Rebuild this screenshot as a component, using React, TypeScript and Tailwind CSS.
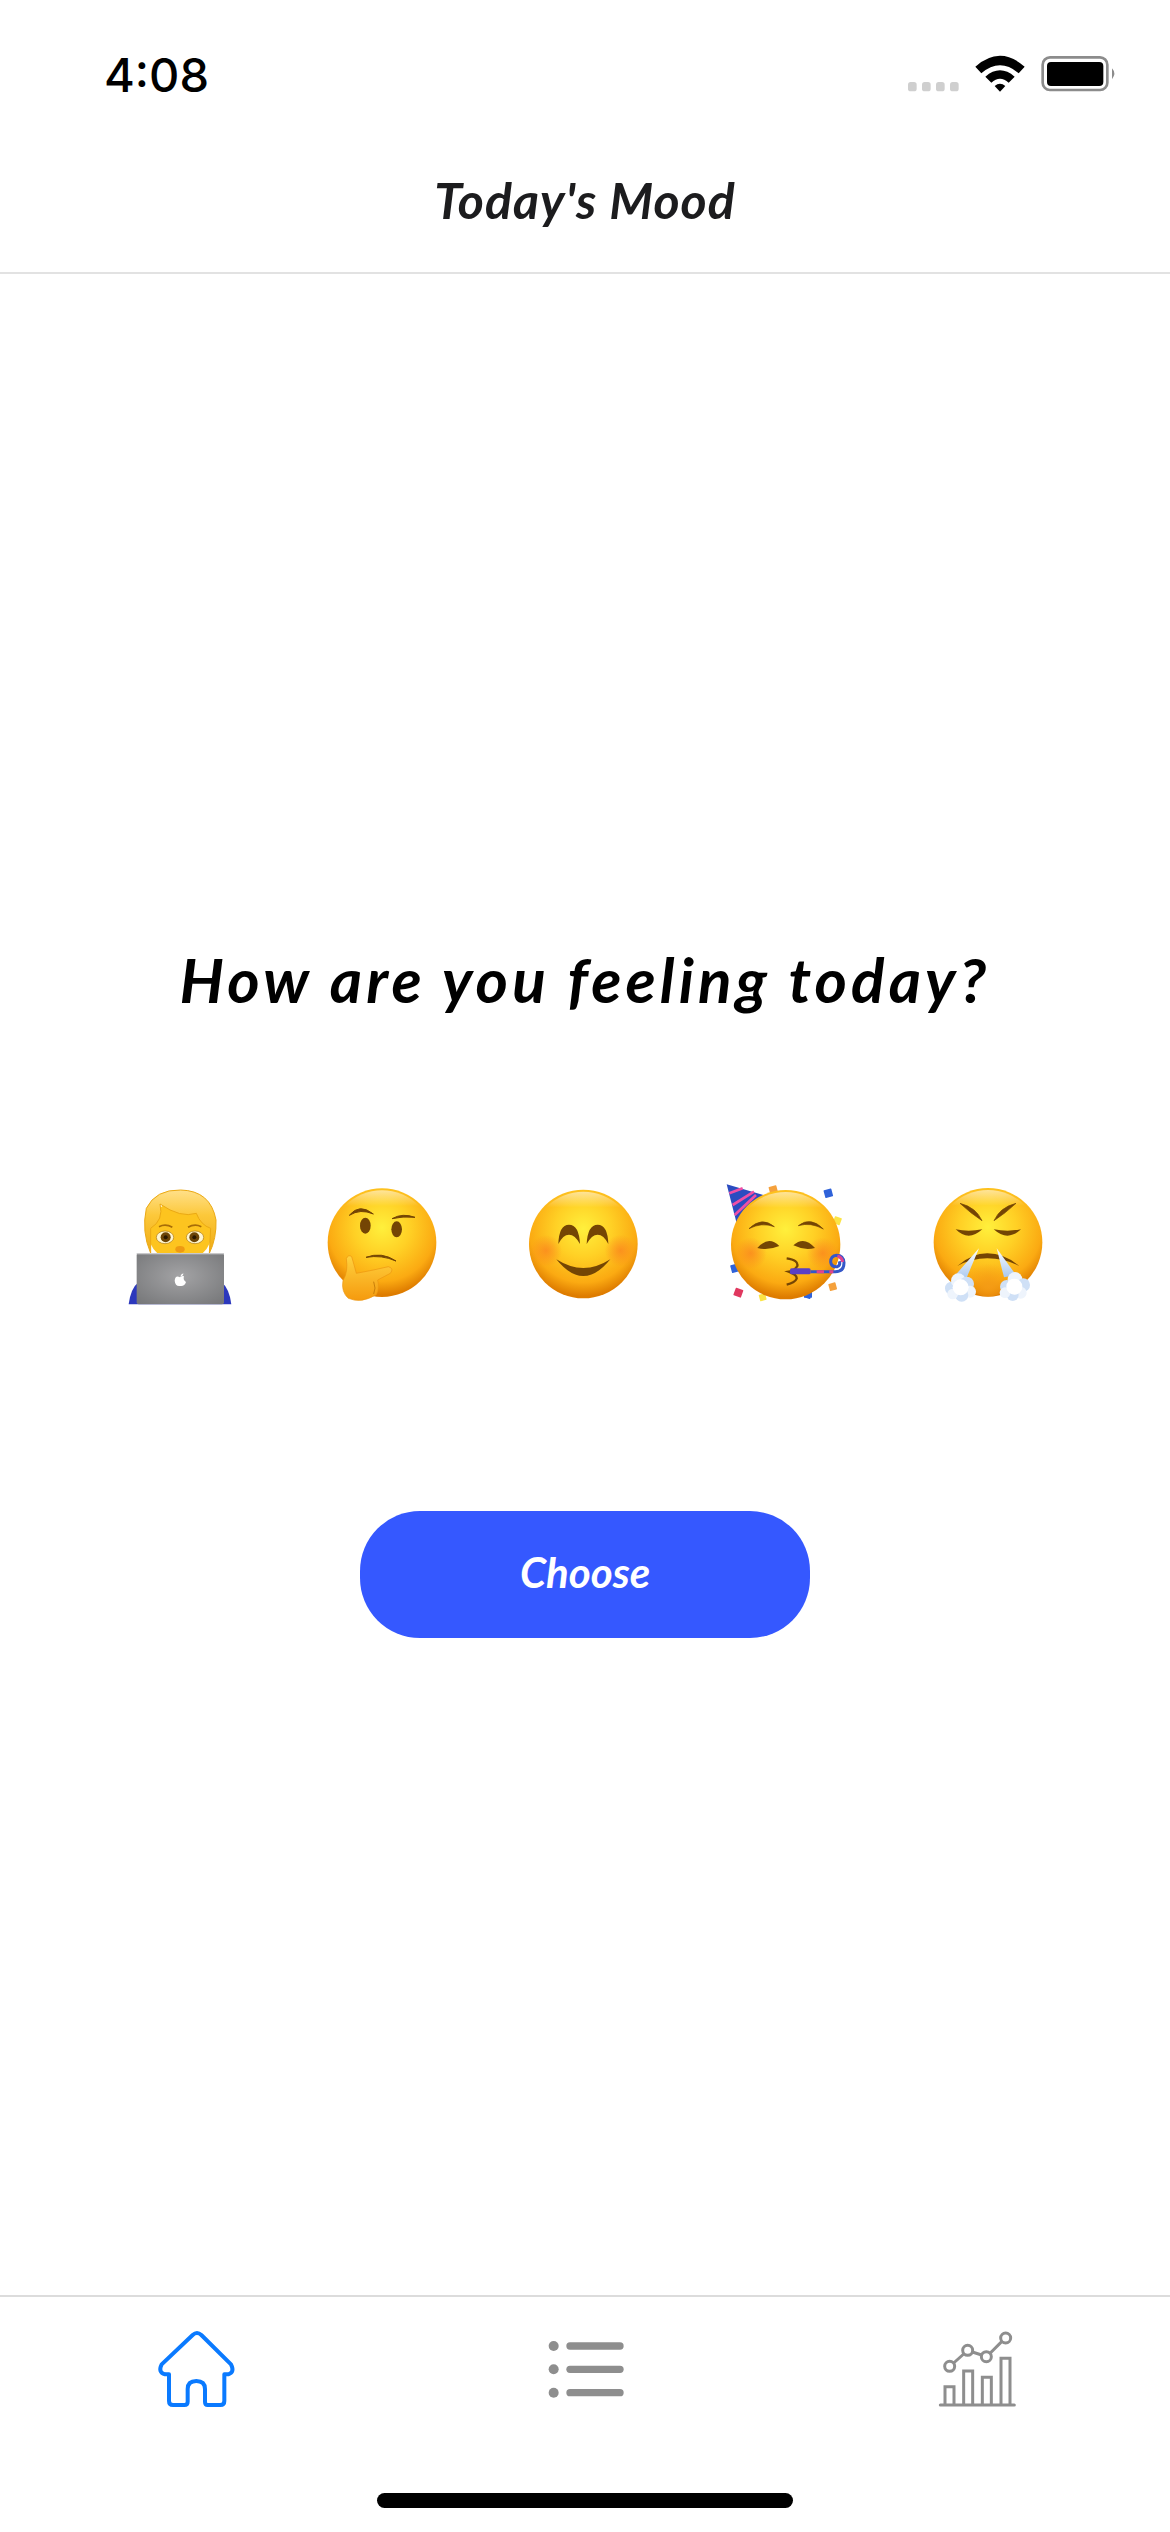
const BROWN = '#744504'

function Face({ id, cx, cy, r = 163 }: { id: string; cx: number; cy: number; r?: number }) {
  return (
    <>
      <defs>
        <radialGradient id={`${id}-base`} cx="50%" cy="36%" r="62%">
          <stop offset="0%" stopColor="#fff03c" />
          <stop offset="42%" stopColor="#ffd025" />
          <stop offset="80%" stopColor="#fbaa12" />
          <stop offset="100%" stopColor="#de7c00" />
        </radialGradient>
        <linearGradient id={`${id}-shine`} x1="0" y1="0" x2="0" y2="1">
          <stop offset="0%" stopColor="#ffffff" stopOpacity="0.55" />
          <stop offset="15%" stopColor="#ffffff" stopOpacity="0" />
        </linearGradient>
      </defs>
      <circle cx={cx} cy={cy} r={r} fill={`url(#${id}-base)`} />
      <circle cx={cx} cy={cy} r={r - 6} fill={`url(#${id}-shine)`} />
    </>
  )
}

function Blush({ id, cx, cy }: { id: string; cx: number; cy: number }) {
  return (
    <>
      <defs>
        <radialGradient id={id}>
          <stop offset="0%" stopColor="#fb8a1e" stopOpacity="0.85" />
          <stop offset="100%" stopColor="#fb8a1e" stopOpacity="0" />
        </radialGradient>
      </defs>
      <circle cx={cx} cy={cy} r="48" fill={`url(#${id})`} />
    </>
  )
}

function PersonEmoji() {
  return (
    <svg viewBox="43 60 390 390" className="w-[130px] h-[130px]">
      <defs>
        <radialGradient id="laptop" cx="50%" cy="45%" r="70%">
          <stop offset="0%" stopColor="#a3a3a5" />
          <stop offset="100%" stopColor="#77787a" />
        </radialGradient>
        <linearGradient id="hair" x1="0" y1="0" x2="0" y2="1">
          <stop offset="0%" stopColor="#ffe08a" />
          <stop offset="40%" stopColor="#fcc83a" />
          <stop offset="100%" stopColor="#efaa14" />
        </linearGradient>
      </defs>
      <path d="M84 433Q90 385 114 366L362 366Q386 385 392 433Z" fill="#2c38bd" />
      <ellipse cx="238" cy="215" rx="96" ry="92" fill="#fdc41f" />
      <path
        d="M150 280Q122 215 137 145Q165 88 240 90Q330 92 346 180Q348 235 326 280L330 205Q300 195 287 160Q240 175 178 132Q190 180 150 205Z"
        fill="url(#hair)"
        stroke="#eba913"
        strokeWidth="3"
      />
      <path d="M175 200Q195 190 215 202M262 202Q282 190 302 200" stroke="#a86e08" strokeWidth="5" fill="none" />
      <ellipse cx="193" cy="232" rx="26" ry="19" fill="#fff6d0" stroke="#a9760f" strokeWidth="2" />
      <ellipse cx="283" cy="232" rx="26" ry="19" fill="#fff6d0" stroke="#a9760f" strokeWidth="2" />
      <circle cx="195" cy="232" r="15" fill="#6d4506" />
      <circle cx="281" cy="232" r="15" fill="#6d4506" />
      <circle cx="195" cy="232" r="6" fill="#2a1900" />
      <circle cx="281" cy="232" r="6" fill="#2a1900" />
      <ellipse cx="238" cy="268" rx="14" ry="10" fill="#ee9a12" />
      <rect x="108" y="279" width="262" height="154" rx="6" fill="url(#laptop)" />
      <rect x="108" y="279" width="262" height="4" fill="#c9c9cb" />
      <path
        d="M238 352Q224 344 222 362Q224 380 238 378Q252 380 256 366Q246 360 250 349Q246 346 238 352Z"
        fill="#ffffff"
      />
      <path d="M239 350Q240 342 248 340Q248 348 239 350Z" fill="#ffffff" />
    </svg>
  )
}

function ThinkingEmoji() {
  return (
    <svg viewBox="648 60 390 390" className="w-[130px] h-[130px]">
      <defs>
        <linearGradient id="hand" x1="0" y1="0" x2="0" y2="1">
          <stop offset="0%" stopColor="#ffd23f" />
          <stop offset="100%" stopColor="#f59a0e" />
        </linearGradient>
      </defs>
      <Face id="think" cx={843} cy={248} />
      <path d="M745 166Q775 128 817 162Q778 145 745 166Z" fill={BROWN} stroke={BROWN} strokeWidth="3" />
      <path d="M873 176Q905 158 942 172Q905 168 873 176Z" fill={BROWN} stroke={BROWN} strokeWidth="3" />
      <ellipse cx="793" cy="197" rx="16" ry="24" fill={BROWN} />
      <ellipse cx="887" cy="208" rx="16" ry="24" fill={BROWN} />
      <path d="M795 292Q842 274 885 303Q842 284 795 292Z" fill={BROWN} stroke={BROWN} strokeWidth="3" />
      <path
        d="M736 296Q742 282 752 290Q758 310 766 340Q820 330 862 320Q880 325 868 340L830 360Q836 385 826 404Q780 432 742 415Q720 395 726 362Q742 335 736 296Z"
        fill="url(#hand)"
        stroke="#ec9610"
        strokeWidth="2"
      />
      <path d="M818 365Q826 385 818 402" stroke="#c97f0a" strokeWidth="3" fill="none" />
    </svg>
  )
}

function SmileEmoji() {
  return (
    <svg viewBox="1254 60 390 390" className="w-[130px] h-[130px]">
      <Face id="smile" cx={1447} cy={252} />
      <Blush id="smile-l" cx={1335} cy={272} />
      <Blush id="smile-r" cx={1559} cy={272} />
      <path d="M1372 252Q1374 194 1404 194Q1434 194 1437 252Q1422 224 1404 224Q1386 224 1372 252Z" fill={BROWN} />
      <path d="M1457 252Q1460 194 1490 194Q1520 194 1522 252Q1508 224 1490 224Q1472 224 1457 252Z" fill={BROWN} />
      <path d="M1366 298Q1447 350 1528 298Q1447 398 1366 298Z" fill={BROWN} />
    </svg>
  )
}

function PartyEmoji() {
  const confetti = [
    { x: 520, y: 90, c: '#f5a13c', s: 24 },
    { x: 598, y: 120, c: '#e0385f', s: 24 },
    { x: 685, y: 100, c: '#2f62d9', s: 24 },
    { x: 712, y: 182, c: '#fbe446', s: 22 },
    { x: 405, y: 325, c: '#2f62d9', s: 24 },
    { x: 415, y: 398, c: '#e0385f', s: 24 },
    { x: 488, y: 412, c: '#fbe446', s: 20 },
    { x: 624, y: 405, c: '#2f62d9', s: 20 },
    { x: 698, y: 380, c: '#f5a13c', s: 22 },
  ]
  return (
    <svg viewBox="363 60 390 390" className="w-[130px] h-[130px]">
      <path d="M380 73L490 105L410 190Z" fill="#2b4cc0" />
      <path d="M388 100L428 85M398 135L462 95M404 165L468 105" stroke="#ef4fa6" strokeWidth="8" fill="none" />
      {confetti.map((c, i) => (
        <rect
          key={i}
          x={c.x - c.s / 2}
          y={c.y - c.s / 2}
          width={c.s}
          height={c.s}
          rx="2"
          fill={c.c}
          transform={`rotate(${i % 2 ? 20 : -15} ${c.x} ${c.y})`}
        />
      ))}
      <rect x="612" y="395" width="24" height="18" fill="#2f62d9" />
      <Face id="party" cx={557} cy={254} r={164} />
      <Blush id="party-l" cx={452} cy={280} />
      <Blush id="party-r" cx={668} cy={280} />
      <path d="M447 206Q485 168 523 200Q485 186 447 206Z" fill={BROWN} stroke={BROWN} strokeWidth="2" />
      <path d="M595 197Q632 168 670 207Q632 186 595 197Z" fill={BROWN} stroke={BROWN} strokeWidth="2" />
      <path d="M472 264Q505 226 538 258Q505 272 472 264Z" fill={BROWN} />
      <path d="M580 256Q612 226 645 264Q612 272 580 256Z" fill={BROWN} />
      <path d="M560 295Q596 300 592 318Q585 332 566 335Q592 345 590 356Q585 368 560 374" stroke={BROWN} strokeWidth="7" fill="none" />
      <rect x="570" y="325" width="62" height="18" rx="5" fill="#5a3fc4" />
      <path d="M632 335H706Q732 335 732 308Q730 286 710 286Q692 288 692 306Q694 322 712 320Q722 316 718 304" stroke="#3457c8" strokeWidth="9" fill="none" />
      <path d="M650 335H672M688 335H700M712 288Q726 292 728 306" stroke="#e0438f" strokeWidth="9" fill="none" />
    </svg>
  )
}

function SteamEmoji() {
  const clouds = [
    [1055, 385, 20], [1075, 362, 22], [1100, 372, 22], [1110, 395, 18], [1085, 405, 20], [1058, 402, 16],
    [1220, 380, 20], [1245, 358, 22], [1270, 375, 20], [1262, 398, 18], [1238, 405, 18], [1215, 398, 16],
  ]
  return (
    <svg viewBox="969 60 390 390" className="w-[130px] h-[130px]">
      <defs>
        <linearGradient id="jet" x1="0" y1="0" x2="0" y2="1">
          <stop offset="0%" stopColor="#ffffff" />
          <stop offset="100%" stopColor="#a9c8ef" />
        </linearGradient>
        <radialGradient id="chin" cx="50%" cy="70%" r="60%">
          <stop offset="0%" stopColor="#f59c15" />
          <stop offset="100%" stopColor="#f59c15" stopOpacity="0" />
        </radialGradient>
      </defs>
      <Face id="steam" cx={1164} cy={247} />
      <ellipse cx="1165" cy="355" rx="62" ry="55" fill="url(#chin)" />
      <path d="M1080 130Q1128 142 1146 182Q1112 160 1080 130Z" fill={BROWN} stroke={BROWN} strokeWidth="2" />
      <path d="M1248 130Q1200 142 1182 182Q1216 160 1248 130Z" fill={BROWN} stroke={BROWN} strokeWidth="2" />
      <path d="M1067 208Q1105 216 1147 208Q1105 246 1067 208Z" fill={BROWN} />
      <path d="M1181 208Q1223 216 1263 208Q1223 246 1181 208Z" fill={BROWN} />
      <path d="M1072 318Q1115 280 1162 280Q1212 280 1258 318Q1212 295 1162 295Q1115 295 1072 318Z" fill={BROWN} />
      <path d="M1137 265L1062 350L1098 358Z" fill="url(#jet)" />
      <path d="M1190 265L1212 352L1248 345Z" fill="url(#jet)" />
      {clouds.map(([x, y, r], i) => (
        <circle key={i} cx={x} cy={y} r={r} fill={i % 2 ? '#eef4fc' : '#cfe0f6'} />
      ))}
      <circle cx="1082" cy="382" r="24" fill="#ffffff" />
      <circle cx="1243" cy="380" r="24" fill="#ffffff" />
    </svg>
  )
}

function StatusIcons() {
  return (
    <svg viewBox="0 0 705 195" className="w-[235px] h-[65px]">
      {[36, 78, 120, 162].map(x => (
        <rect key={x} x={x} y="126" width="26" height="28" rx="8" fill="#cfcfcf" />
      ))}
      <path d="M238 80Q312 15 386 80L368 100Q312 52 256 100Z" fill="#000" />
      <path d="M268 110Q312 72 356 110L338 128Q312 105 286 128Z" fill="#000" />
      <path d="M296 138Q312 124 328 138L312 155Z" fill="#000" />
      <rect x="440" y="52" width="194" height="98" rx="22" fill="none" stroke="#8c8c8c" strokeWidth="8" />
      <rect x="453" y="66" width="169" height="72" rx="12" fill="#000" />
      <path d="M648 85Q662 100 648 118Z" fill="#8c8c8c" />
    </svg>
  )
}

function HomeIcon() {
  return (
    <svg viewBox="0 0 330 315" className="w-[110px] h-[105px]">
      <path
        d="M155 60Q168 48 181 60L270 148Q282 172 262 178L250 178L250 258Q250 270 238 270L200 270Q192 270 192 260L192 222Q192 198 166 198Q140 198 140 222L140 260Q140 270 130 270L96 270Q84 270 84 258L84 178L72 178Q50 172 62 148Z"
        fill="none"
        stroke="#0a7aff"
        strokeWidth="12"
        strokeLinejoin="round"
      />
    </svg>
  )
}

function ListIcon() {
  return (
    <svg viewBox="0 0 330 255" className="w-[110px] h-[85px]">
      {[63, 133, 203].map(y => (
        <g key={y} fill="#8e8e8e">
          <circle cx="68" cy={y} r="15" />
          <rect x="106" y={y - 11} width="172" height="22" rx="11" />
        </g>
      ))}
    </svg>
  )
}

function ChartIcon() {
  return (
    <svg viewBox="0 0 330 315" className="w-[110px] h-[105px]" fill="none" stroke="#8e8e8e" strokeWidth="9">
      <path d="M40 270H262" strokeLinecap="round" />
      <path d="M54 270V215H81V270M110 270V168H137V270M166 270V187H193V270M222 270V130H249V270" />
      <path d="M80 144L110 117M136 111L164 120M190 114L224 80" />
      <circle cx="68" cy="154" r="15" />
      <circle cx="122" cy="106" r="15" />
      <circle cx="178" cy="125" r="15" />
      <circle cx="236" cy="69" r="15" />
    </svg>
  )
}

export default function App() {
  return (
    <div className="w-[1170px] h-[2532px] bg-white flex flex-col font-['Lato',sans-serif] overflow-hidden">
      <div className="h-[274px] border-b-2 border-[#e2e2e2] flex flex-col shrink-0">
        <div className="h-[170px] pl-[104px] pr-[39px] flex justify-between items-start">
          <span className="mt-[45px] text-[47px] leading-[60px] font-medium text-black font-['Inter',sans-serif]">4:08</span>
          <div className="mt-[40px]">
            <StatusIcons />
          </div>
        </div>
        <div className="text-center text-[50px] leading-[60px] font-bold italic text-[#1c1c1e] tracking-[1px]">
          Today's Mood
        </div>
      </div>

      <main className="flex-1 flex flex-col items-center">
        <h1 className="mt-[665px] text-[62px] leading-[80px] font-bold italic text-black tracking-[4.1px]">
          How are you feeling today?
        </h1>
        <div className="mt-[161px] flex justify-center pr-[3px]">
          <div className="w-[202px] flex justify-center"><PersonEmoji /></div>
          <div className="w-[202px] flex justify-center"><ThinkingEmoji /></div>
          <div className="w-[202px] flex justify-center"><SmileEmoji /></div>
          <div className="w-[202px] flex justify-center"><PartyEmoji /></div>
          <div className="w-[202px] flex justify-center"><SteamEmoji /></div>
        </div>
        <button className="mt-[201px] w-[450px] h-[127px] rounded-[60px] bg-[#3558ff] text-white text-[42px] font-bold italic pb-[4px]">
          Choose
        </button>
      </main>

      <div className="h-[237px] shrink-0 border-t-2 border-[#dcdcdc] flex flex-col">
        <div className="flex items-start">
          <div className="ml-[141px] mt-[18px]"><HomeIcon /></div>
          <div className="ml-[280px] mt-[28px]"><ListIcon /></div>
          <div className="ml-[286px] mt-[18px]"><ChartIcon /></div>
        </div>
        <div className="mt-auto mb-[24px] mx-auto w-[416px] h-[15px] rounded-full bg-black" />
      </div>
    </div>
  )
}
